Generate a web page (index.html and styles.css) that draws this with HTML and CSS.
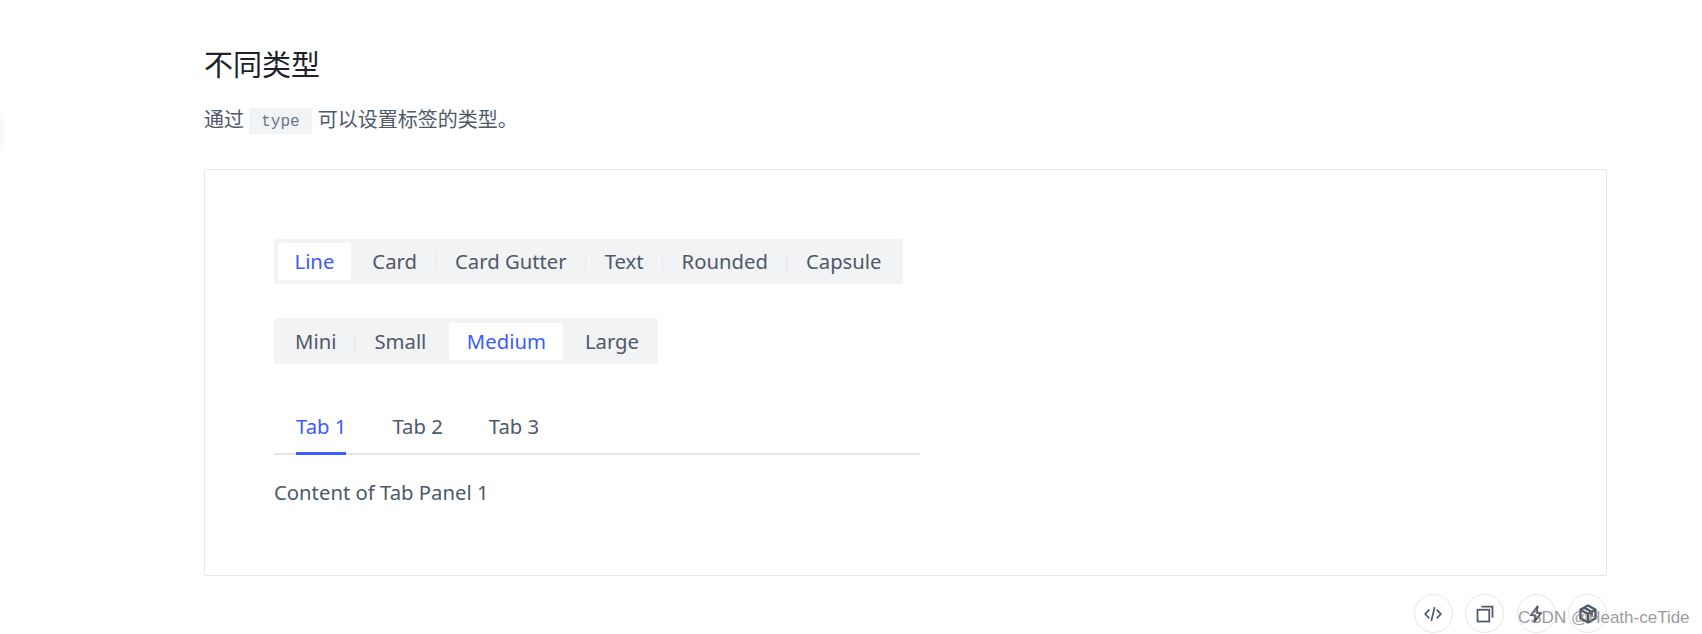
FILE: index.html
```html
<!DOCTYPE html>
<html lang="en">
<head>
    <meta charset="UTF-8">
    <meta name="viewport" content="width=device-width, initial-scale=1.0">
    <title>不同类型</title>
    <link rel="stylesheet" href="styles.css">
</head>
<body>
    <div class="side-handle"></div>

    <div class="doc">
        <h2 class="doc-title">不同类型</h2>
        <p class="doc-text">通过 <code>type</code> 可以设置标签的类型。</p>

        <div class="demo">
            <div class="segment">
                <span class="segment-item active">Line</span>
                <span class="segment-item">Card</span>
                <i class="segment-line"></i>
                <span class="segment-item">Card Gutter</span>
                <i class="segment-line"></i>
                <span class="segment-item">Text</span>
                <i class="segment-line"></i>
                <span class="segment-item">Rounded</span>
                <i class="segment-line"></i>
                <span class="segment-item">Capsule</span>
            </div>

            <div class="segment segment-sizes">
                <span class="segment-item">Mini</span>
                <i class="segment-line"></i>
                <span class="segment-item">Small</span>
                <span class="segment-item active">Medium</span>
                <span class="segment-item">Large</span>
            </div>

            <div class="tabs">
                <div class="tab-list">
                    <span class="tab active">Tab 1</span>
                    <span class="tab">Tab 2</span>
                    <span class="tab">Tab 3</span>
                </div>
                <div class="tab-panel">Content of Tab Panel 1</div>
            </div>
        </div>

        <div class="actions">
            <button class="action" type="button">
                <svg viewBox="0 0 16 16"><path d="M5 4.5 1.8 8 5 11.5M11 4.5 14.2 8 11 11.5M9.3 2.5 6.7 13.5"/></svg>
            </button>
            <button class="action" type="button">
                <svg viewBox="0 0 16 16"><rect x="2" y="4.6" width="9.4" height="9.4"/><path d="M5.2 2h8.8v9"/></svg>
            </button>
            <button class="action" type="button">
                <svg viewBox="0 0 16 16"><path d="M9.5 1.5 4 8.8h3.6M6.5 14.5 12 7.2H8.4M9.5 1.5 8.4 7.2M6.5 14.5l1.1-5.7"/></svg>
            </button>
            <button class="action action-cube" type="button">
                <svg viewBox="0 0 16 16"><path d="M8 1.2 14 4.6v6.8L8 14.8 2 11.4V4.6zM2 4.6 8 8l6-3.4M8 8v6.8M5 2.9l6 3.4v3"/></svg>
            </button>
        </div>
    </div>

    <div class="watermark">CSDN @Heath-ceTide</div>
</body>
</html>
```

FILE: styles.css
```css
body {
    font-family: "Noto Sans", "Noto Sans CJK SC", sans-serif;
    background-color: #fff;
    color: #4e5969;
    margin: 0;
    padding: 0;
    height: 634px;
    overflow: hidden;
}

.side-handle {
    position: absolute;
    left: -14px;
    top: 117px;
    width: 14px;
    height: 32px;
    box-shadow: 0 0 10px rgba(0, 0, 0, 0.08);
}

/* Doc section */
.doc {
    padding: 44px 95px 0 204px;
}

.doc-title {
    font-size: 29px;
    font-weight: 400;
    line-height: 42px;
    color: #1d2129;
    margin: 0;
}

.doc-text {
    font-size: 20px;
    line-height: 30px;
    margin: 19px 0 32px;
}

.doc-text code {
    font-family: "Liberation Mono", "DejaVu Sans Mono", monospace;
    font-size: 16px;
    color: #6b7785;
    background-color: #f2f3f5;
    padding: 5px 12px 3px;
    margin: 0 1px 0 0;
    vertical-align: 1px;
}

/* Demo card */
.demo {
    border: 1px solid #e5e6eb;
    border-radius: 2px;
    height: 407px;
    padding: 69px 69px 0;
    box-sizing: border-box;
    display: flex;
    flex-direction: column;
    align-items: flex-start;
}

.segment {
    display: flex;
    align-items: center;
    background-color: #f2f3f5;
    border-radius: 3px;
    padding: 4px 3px 4px 4px;
    height: 45px;
    box-sizing: border-box;
    margin-bottom: 34px;
}

.segment-sizes {
    height: 46px;
    padding: 5px 1px 4px 3px;
    margin-bottom: 33px;
}

.segment-item {
    font-size: 20.3px;
    line-height: 37px;
    padding: 0 18px;
    border-radius: 3px;
}

.segment-item.active {
    background-color: #fff;
    color: #3c5cff;
    padding: 0 17px;
    margin: 0 3px;
}

.segment-item.active:first-child {
    margin: 0 3.5px 0 0;
    padding: 0 16.5px;
}

.segment-sizes .segment-item.active {
    padding: 0 17.5px;
    margin: 0 3.5px 0 5px;
}

.segment-line {
    width: 1px;
    height: 18px;
    margin-right: 1px;
    background-color: #e5e6eb;
}

.tabs {
    width: 646px;
}

.tab-list {
    display: flex;
    gap: 46px;
    padding-left: 22px;
    height: 59px;
    margin-top: -1px;
    box-sizing: border-box;
    border-bottom: 2px solid #e5e6eb;
}

.tab {
    font-size: 20.3px;
    line-height: 26px;
    padding-top: 17px;
    height: 59px;
    box-sizing: border-box;
}

.tab.active {
    color: #3c5cff;
    border-bottom: 3px solid #3c5cff;
}

.tab-panel {
    font-size: 20.3px;
    line-height: 30px;
    margin-top: 22px;
}

/* Action buttons */
.actions {
    display: flex;
    justify-content: flex-end;
    gap: 12.5px;
    margin-top: 18px;
}

.action {
    width: 39px;
    height: 39px;
    border: 1px solid #e5e6eb;
    border-radius: 50%;
    background: #fff;
    padding: 0;
    display: flex;
    align-items: center;
    justify-content: center;
}

.action svg {
    width: 20px;
    height: 20px;
    fill: none;
    stroke: #4e5969;
    stroke-width: 1.4;
}

.action-cube svg {
    stroke-width: 1.9;
}

.watermark {
    position: absolute;
    left: 1518px;
    top: 606px;
    font-family: "Liberation Sans", sans-serif;
    font-size: 17px;
    line-height: 24px;
    color: rgba(120, 120, 120, 0.75);
}
```
